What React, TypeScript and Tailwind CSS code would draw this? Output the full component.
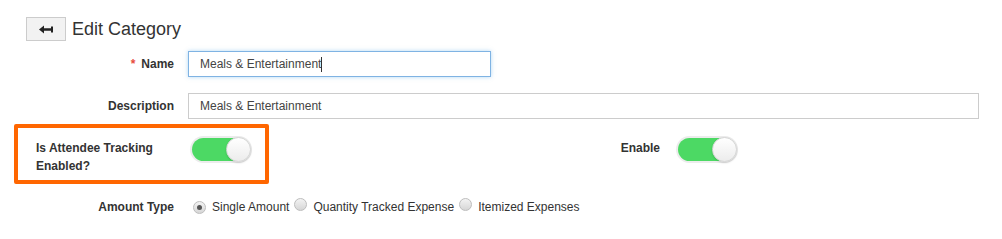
import React from "react";

function Toggle() {
  return (
    <span className="inline-flex w-[62px] h-[27px] rounded-full bg-[#ececec] p-[2px] shrink-0">
      <span className="relative flex-1 rounded-full bg-[#4cd964]">
        <span className="absolute right-[-1px] top-[-1px] w-[25px] h-[25px] rounded-full border border-[#d6d6d6] bg-gradient-to-b from-white to-[#ececec] shadow-[0_1px_2px_rgba(0,0,0,0.15)]" />
      </span>
    </span>
  );
}

function Radio({ checked }: { checked?: boolean }) {
  return (
    <span className="inline-flex items-center justify-center w-[13px] h-[13px] rounded-full border border-[#bdbdbd] bg-gradient-to-b from-[#f3f3f3] to-[#d6d6d6] shrink-0">
      {checked && <span className="w-[5px] h-[5px] rounded-full bg-[#555]" />}
    </span>
  );
}

export default function App() {
  return (
    <div className="w-[1002px] h-[239px] bg-white text-[#333] font-['Liberation_Sans',Arial,sans-serif] pt-[17px] overflow-hidden">
      {/* header */}
      <div className="flex items-center ml-[26px] h-[24px]">
        <button className="flex items-center justify-center w-[40px] h-[24px] border border-[#cccccc] bg-[#f2f2f2]">
          <svg width="14" height="9" viewBox="0 0 14 9">
            <path d="M0 4.5 L5 0.5 L5 3.3 L12 3.3 L12 5.7 L5 5.7 L5 8.5 Z" fill="#222" />
            <rect x="12" y="1.5" width="2" height="6" fill="#222" />
          </svg>
        </button>
        <span className="ml-[6px] text-[18px] leading-[24px] text-[#333]">Edit Category</span>
      </div>

      {/* Name */}
      <div className="flex items-center h-[26px] mt-[10px]">
        <div className="w-[174px] text-right text-[12px] font-bold leading-[16px]">
          <span className="text-[#e74c3c] mr-[6px]">*</span>Name
        </div>
        <div className="ml-[14px] w-[303px] h-[26px] border border-[#7fb3e3] shadow-[0_0_4px_rgba(102,175,233,0.5)] flex items-center pl-[11px] text-[12px] text-[#444]">
          Meals &amp; Entertainment<span className="inline-block w-px h-[15px] bg-[#333]" />
        </div>
      </div>

      {/* Description */}
      <div className="flex items-center h-[26px] mt-[16px]">
        <div className="w-[174px] text-right text-[12px] font-bold leading-[16px]">Description</div>
        <div className="ml-[14px] w-[791px] h-[26px] border border-[#cccccc] flex items-center pl-[11px] text-[12px] text-[#444]">
          Meals &amp; Entertainment
        </div>
      </div>

      {/* toggles */}
      <div className="flex mt-[5px] h-[60px]">
        <div className="ml-[14px] w-[255px] h-[60px] border-4 border-[#ff6600] rounded-[2px] flex items-start pt-[4px]">
          <div className="ml-[18px] w-[154px] mt-[7px] text-[12px] font-bold leading-[18px]">
            Is Attendee Tracking
            <br />
            Enabled?
          </div>
          <div className="mt-[4px]">
            <Toggle />
          </div>
        </div>
        <div className="flex items-start pt-[12px]">
          <div className="w-[391px] text-right text-[12px] font-bold leading-[16px] mt-[4px]">Enable</div>
          <div className="ml-[16px]">
            <Toggle />
          </div>
        </div>
      </div>

      {/* Amount type */}
      <div className="flex items-center h-[16px] mt-[15px] text-[12px]">
        <div className="w-[174px] text-right font-bold">Amount Type</div>
        <div className="ml-[19px] flex items-center">
          <Radio checked />
          <span className="ml-[6px]">Single Amount</span>
          <span className="ml-[5px]"><Radio /></span>
          <span className="ml-[6px]">Quantity Tracked Expense</span>
          <span className="ml-[5px]"><Radio /></span>
          <span className="ml-[6px]">Itemized Expenses</span>
        </div>
      </div>
    </div>
  );
}
